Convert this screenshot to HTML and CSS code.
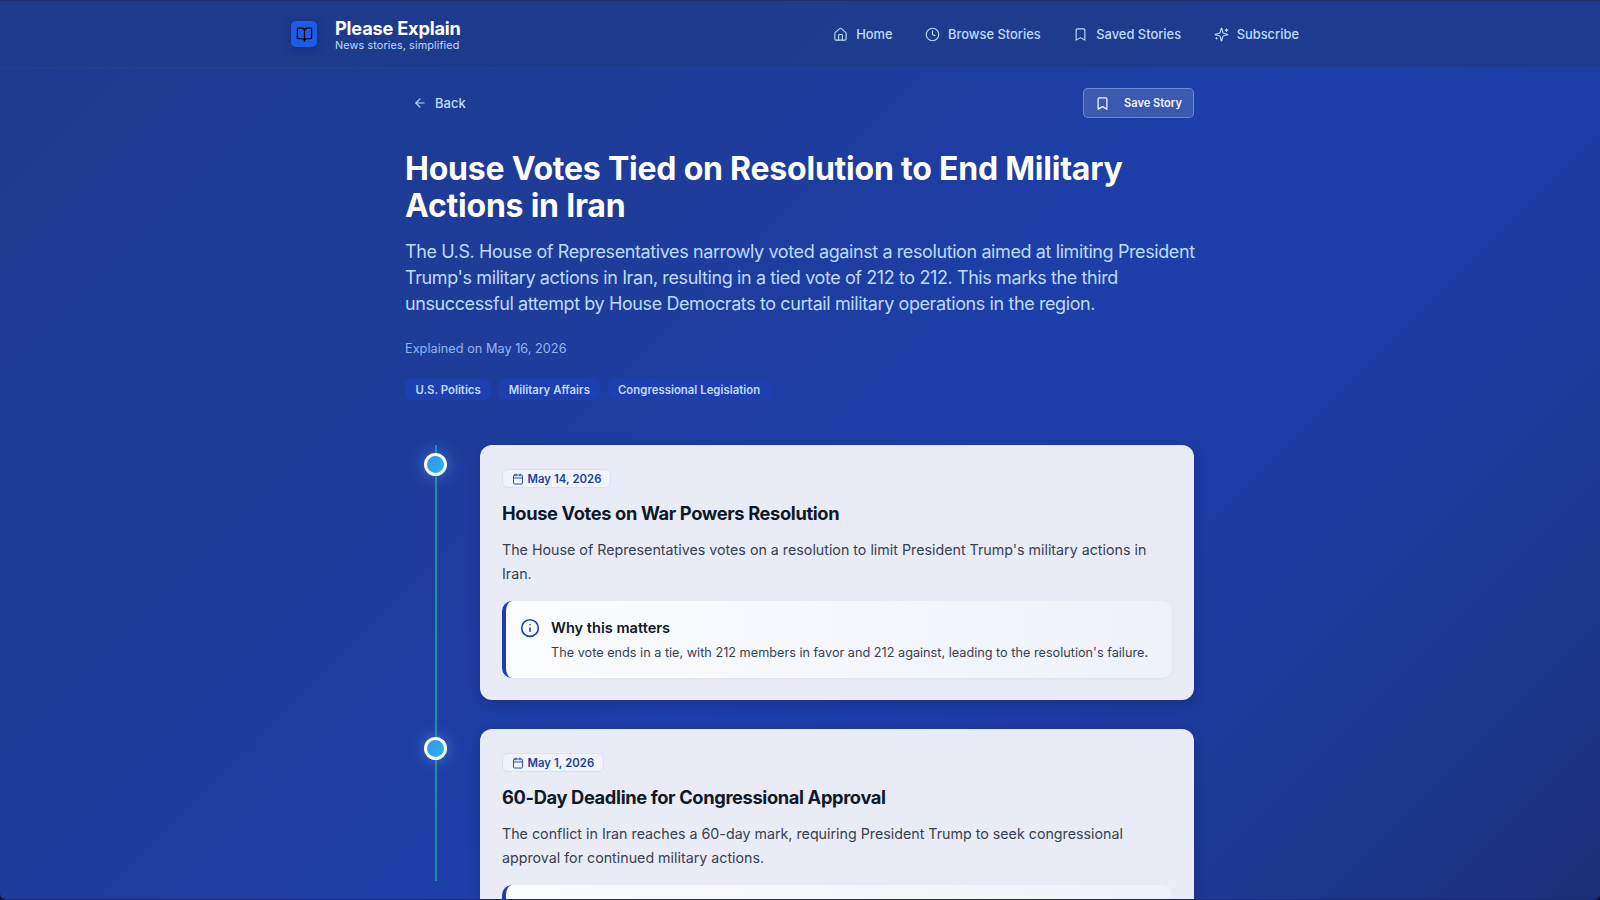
FILE: index.html
```html
<!DOCTYPE html>
<html lang="en">
<head>
<meta charset="utf-8">
<title>Please Explain</title>
<link rel="stylesheet" href="styles.css">
</head>
<body>
<div class="page">
  <header class="topbar">
    <div class="topbar-inner">
      <a class="brand">
        <span class="logo">
          <svg width="17" height="17" viewBox="0 0 24 24" fill="none" stroke="#fff" stroke-width="1.7" stroke-linecap="round" stroke-linejoin="round"><path d="M12 7v14"/><path d="M3 18a1 1 0 0 1-1-1V4a1 1 0 0 1 1-1h5a4 4 0 0 1 4 4 4 4 0 0 1 4-4h5a1 1 0 0 1 1 1v13a1 1 0 0 1-1 1h-6a3 3 0 0 0-3 3 3 3 0 0 0-3-3z"/></svg>
        </span>
        <span class="brand-text">
          <span class="brand-name">Please Explain</span>
          <span class="brand-sub">News stories, simplified</span>
        </span>
      </a>
      <nav class="nav">
        <a class="nav-link"><svg class="nav-icon" viewBox="0 0 24 24"><path d="M15 21v-8a1 1 0 0 0-1-1h-4a1 1 0 0 0-1 1v8"/><path d="M3 10a2 2 0 0 1 .7-1.5l7-6a2 2 0 0 1 2.6 0l7 6A2 2 0 0 1 21 10v9a2 2 0 0 1-2 2H5a2 2 0 0 1-2-2z"/></svg>Home</a>
        <a class="nav-link"><svg class="nav-icon" viewBox="0 0 24 24"><circle cx="12" cy="12" r="10"/><path d="M12 6v6l4 2"/></svg>Browse Stories</a>
        <a class="nav-link"><svg class="nav-icon" viewBox="0 0 24 24"><path d="m19 21-7-4-7 4V5a2 2 0 0 1 2-2h10a2 2 0 0 1 2 2z"/></svg>Saved Stories</a>
        <a class="nav-link"><svg class="nav-icon" viewBox="0 0 24 24"><path d="M9.9 15.5a2 2 0 0 0-1.4-1.4l-6.1-1.6a.5.5 0 0 1 0-1l6.1-1.6a2 2 0 0 0 1.4-1.4l1.6-6.1a.5.5 0 0 1 1 0l1.6 6.1a2 2 0 0 0 1.4 1.4l6.1 1.6a.5.5 0 0 1 0 1l-6.1 1.6a2 2 0 0 0-1.4 1.4l-1.6 6.1a.5.5 0 0 1-1 0z"/><path d="M20 3v4"/><path d="M22 5h-4"/><path d="M4 17v2"/><path d="M5 18H3"/></svg>Subscribe</a>
      </nav>
    </div>
  </header>

  <main class="content">
    <div class="actions">
      <a class="back"><svg class="back-icon" viewBox="0 0 24 24"><path d="m12 19-7-7 7-7"/><path d="M19 12H5"/></svg>Back</a>
      <button class="save"><svg class="save-icon" viewBox="0 0 24 24"><path d="m19 21-7-4-7 4V5a2 2 0 0 1 2-2h10a2 2 0 0 1 2 2z"/></svg>Save Story</button>
    </div>

    <h1 class="title">House Votes Tied on Resolution to End Military Actions in Iran</h1>
    <p class="summary">The U.S. House of Representatives narrowly voted against a resolution aimed at limiting President Trump's military actions in Iran, resulting in a tied vote of 212 to 212. This marks the third unsuccessful attempt by House Democrats to curtail military operations in the region.</p>
    <p class="explained">Explained on May 16, 2026</p>
    <div class="tags">
      <span class="tag">U.S. Politics</span>
      <span class="tag">Military Affairs</span>
      <span class="tag">Congressional Legislation</span>
    </div>

    <section class="timeline">
      <div class="line"></div>

      <article class="event">
        <span class="dot"></span>
        <div class="card">
          <span class="date"><svg class="date-icon" viewBox="0 0 24 24"><path d="M8 2v4"/><path d="M16 2v4"/><rect x="3" y="4" width="18" height="18" rx="2"/><path d="M3 10h18"/></svg>May 14, 2026</span>
          <h2 class="event-title">House Votes on War Powers Resolution</h2>
          <p class="event-text">The House of Representatives votes on a resolution to limit President Trump's military actions in Iran.</p>
          <div class="why">
            <svg class="why-icon" viewBox="0 0 24 24"><circle cx="12" cy="12" r="10"/><path d="M12 16v-4"/><path d="M12 8h.01"/></svg>
            <div class="why-body">
              <h3 class="why-title">Why this matters</h3>
              <p class="why-text">The vote ends in a tie, with 212 members in favor and 212 against, leading to the resolution's failure.</p>
            </div>
          </div>
        </div>
      </article>

      <article class="event">
        <span class="dot"></span>
        <div class="card">
          <span class="date"><svg class="date-icon" viewBox="0 0 24 24"><path d="M8 2v4"/><path d="M16 2v4"/><rect x="3" y="4" width="18" height="18" rx="2"/><path d="M3 10h18"/></svg>May 1, 2026</span>
          <h2 class="event-title">60-Day Deadline for Congressional Approval</h2>
          <p class="event-text">The conflict in Iran reaches a 60-day mark, requiring President Trump to seek congressional approval for continued military actions.</p>
          <div class="why"></div>
        </div>
      </article>
    </section>
  </main>
</div>
</body>
</html>
```
FILE: styles.css
```css
* { box-sizing: border-box; }
html, body { margin: 0; height: 100%; overflow: hidden; }
body {
  font-family: Inter, "Noto Sans", sans-serif;
  background: #0b1030;
  -webkit-font-smoothing: antialiased;
}
.page {
  height: 900px;
  overflow: hidden;
  border-bottom: 1px solid #1c2c6c;
  border-radius: 0 0 6px 6px;
  background: linear-gradient(135deg, #1e3a8e 0%, #1e3c9b 36%, #1d3fa9 55%, #1c3da6 68%, #1c3890 85%, #1b2f78 100%);
}
svg { fill: none; stroke: currentColor; stroke-linecap: round; stroke-linejoin: round; flex: none; }

.topbar {
  height: 68px;
  border-top: 1px solid #232f6c;
  background: rgba(30, 58, 138, 0.82);
  border-bottom: 1px solid rgba(37, 68, 160, 0.6);
}
.topbar-inner {
  width: 1024px;
  margin: 0 auto;
  padding: 0 13px 0 3px;
  height: 66px;
  display: flex;
  align-items: center;
  justify-content: space-between;
}
.brand { display: flex; align-items: center; gap: 18px; }
.logo {
  width: 26px; height: 26px;
  border-radius: 5px;
  background: #1a5ce6;
  box-shadow: 0 2px 8px rgba(15, 30, 90, 0.35);
  display: flex; align-items: center; justify-content: center;
}
.brand-text { display: flex; flex-direction: column; }
.brand-name { color: #fff; font-size: 18.2px; font-weight: 700; line-height: 20px; letter-spacing: -0.2px; }
.brand-sub { margin-top: 1px; color: #bfdbfe; font-size: 10.85px; line-height: 12px; letter-spacing: 0.1px; }
.nav { display: flex; align-items: center; gap: 32.5px; }
.nav-link { display: flex; align-items: center; gap: 8px; color: #bfdbfe; font-size: 12.9px; font-weight: 500; }
.nav-icon { width: 15px; height: 15px; stroke-width: 1.8; }

.content { width: 789px; margin-left: 405px; }
.actions { display: flex; align-items: center; justify-content: space-between; margin-top: 20px; height: 30px; }
.back { display: flex; align-items: center; gap: 8px; margin-left: 8px; color: #bfdbfe; font-size: 13px; font-weight: 500; }
.back-icon { width: 14px; height: 14px; stroke-width: 2; }
.save {
  width: 111px; height: 30px;
  display: flex; align-items: center; gap: 14px;
  padding: 0 0 0 11px;
  border: 1px solid rgba(147, 175, 240, 0.55);
  border-radius: 5px;
  background: rgba(255, 255, 255, 0.14);
  color: #eff6ff;
  font: 600 11.1px Inter, sans-serif;
}
.save-icon { width: 15px; height: 15px; stroke-width: 2; }

.title { margin: 32px 0 0; color: #fff; font-size: 32px; line-height: 37px; font-weight: 700; letter-spacing: -0.22px; }
.summary { margin: 15px -3px 0 0; color: #bfdbfe; font-size: 18px; line-height: 26px; letter-spacing: -0.4px; }
.explained { margin: 22px 0 0; color: #93b5f5; font-size: 12.75px; line-height: 20px; }
.tags { display: flex; gap: 7.3px; margin-top: 20px; }
.tag {
  height: 21px; padding: 0 10.4px;
  display: flex; align-items: center;
  border-radius: 6px;
  background: #1d40ae;
  color: #bfdbfe;
  font-size: 11.4px; font-weight: 600;
}

.timeline { position: relative; margin-top: 44.5px; }
.line {
  position: absolute; left: 30px; top: 0;
  width: 2px; height: 436px;
  background: #1b90a2;
}
.event { position: relative; padding-left: 75px; margin-bottom: 29px; }
.dot {
  position: absolute; left: 18.7px; top: 8px;
  width: 23px; height: 23px;
  border-radius: 50%;
  border: 3.5px solid #fff;
  background: linear-gradient(135deg, #3b8ff0, #22b8e6);
  box-shadow: 0 0 16px rgba(96, 165, 250, 0.55);
}
.card {
  padding: 24.5px 22px 22px;
  border-radius: 12px;
  background: #e9ecf7;
  box-shadow: 0 4px 12px rgba(15, 30, 90, 0.3);
}
.date {
  display: inline-flex; align-items: center; gap: 3.5px;
  height: 19px; padding: 0 9px 0 9px;
  border: 1px solid #d4e1f6;
  border-radius: 6px;
  background: #eff4fd;
  color: #1e3f9e;
  font-size: 11.3px; font-weight: 600; letter-spacing: 0.07px;
  vertical-align: top;
}
.date-icon { width: 12px; height: 12px; stroke-width: 1.8; }
.event-title { margin: 12px 0 0; color: #111827; font-size: 18.3px; line-height: 24px; font-weight: 700; letter-spacing: -0.36px; }
.event-text { margin: 12.5px 0 0; color: #374151; font-size: 14.25px; line-height: 24.4px; }
.why {
  display: flex; gap: 11px;
  margin-top: 14.5px;
  height: 77px;
  padding: 17px 20px 0 14px;
  border-left: 4px solid #1e40af;
  border-radius: 10px;
  background: linear-gradient(90deg, #fbfcfe, #eff2fb);
  box-shadow: 0 1px 2px rgba(30, 58, 138, 0.05);
}
.why-icon { width: 20px; height: 20px; stroke-width: 1.9; color: #1e40af; }
.why-title { margin: 0; color: #111827; font-size: 14.6px; line-height: 20px; font-weight: 600; }
.why-text { margin: 6px 0 0; color: #374151; font-size: 12.7px; line-height: 18px; white-space: nowrap; }
```
